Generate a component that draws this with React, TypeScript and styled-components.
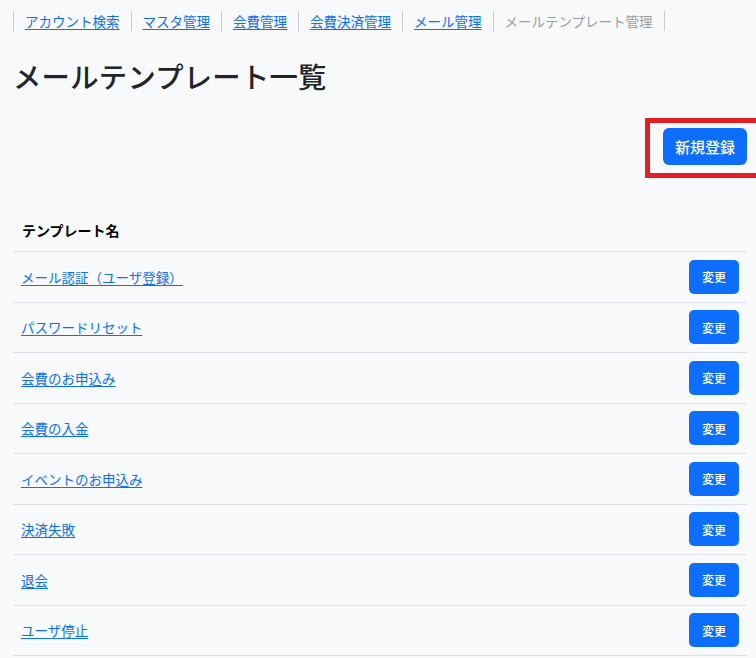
import React from "react";
import styled, { createGlobalStyle } from "styled-components";

const Global = createGlobalStyle`
  html, body { margin: 0; padding: 0; background: #f8f9fa; }
  body {
    font-family: "Noto Sans CJK JP", "Noto Sans", sans-serif;
    color: #212529;
    overflow: hidden;
  }
`;

const Page = styled.div`
  padding: 0 9px 0 13px;
`;

const Breadcrumb = styled.nav`
  display: flex;
  align-items: center;
  padding-top: 11px;
  height: 20px;
`;

const Crumb = styled.a<{ $current?: boolean }>`
  display: block;
  border-left: 1px solid #c8cacc;
  padding: 0 11px 0 11px;
  font-size: 13.5px;
  line-height: 20px;
  color: ${(p) => (p.$current ? "#9a9ea3" : "#0d6efd")};
  text-decoration: ${(p) => (p.$current ? "none" : "underline")};
  text-underline-offset: 2px;
  &:last-child { border-right: 1px solid #c8cacc; }
`;

const Title = styled.h1`
  margin: 27px 0 0 0;
  font-size: 28.3px;
  font-weight: 500;
  line-height: 36px;
  letter-spacing: 0.3px;
`;

const Actions = styled.div`
  display: flex;
  justify-content: flex-end;
  margin-top: 24px;
  margin-right: -16px;
`;

const Highlight = styled.div`
  border: 5px solid #e31e24;
  padding: 5px 11px 8px 13px;
`;

const PrimaryButton = styled.button<{ $small?: boolean }>`
  background: #0d6efd;
  color: #fff;
  border: none;
  border-radius: ${(p) => (p.$small ? "5px" : "6px")};
  font-family: inherit;
  font-size: ${(p) => (p.$small ? "12px" : "15px")};
  font-weight: 500;
  width: ${(p) => (p.$small ? "50px" : "84px")};
  height: ${(p) => (p.$small ? "34px" : "37px")};
  padding: 0;
  cursor: pointer;
`;

const Table = styled.div`
  margin-top: 34px;
`;

const HeaderRow = styled.div`
  padding: 0 9px 3px;
  height: 36px;
  display: flex;
  align-items: center;
  font-size: 14px;
  font-weight: 700;
  color: #000;
  border-bottom: 1px solid #dee2e6;
`;

const Row = styled.div`
  display: flex;
  align-items: center;
  justify-content: space-between;
  height: 49.5px;
  padding: 0 8px;
  border-bottom: 1px solid #dee2e6;
`;

const RowLink = styled.a`
  font-size: 13.5px;
  color: #0d6efd;
  text-decoration: underline;
  text-underline-offset: 2px;
`;

const crumbs = ["アカウント検索", "マスタ管理", "会費管理", "会費決済管理", "メール管理"];
const rows = [
  "メール認証（ユーザ登録）",
  "パスワードリセット",
  "会費のお申込み",
  "会費の入金",
  "イベントのお申込み",
  "決済失敗",
  "退会",
  "ユーザ停止",
];

export default function App() {
  return (
    <Page>
      <Global />
      <Breadcrumb>
        {crumbs.map((c) => (
          <Crumb key={c} href="#">{c}</Crumb>
        ))}
        <Crumb as="span" $current>メールテンプレート管理</Crumb>
      </Breadcrumb>
      <Title>メールテンプレート一覧</Title>
      <Actions>
        <Highlight>
          <PrimaryButton>新規登録</PrimaryButton>
        </Highlight>
      </Actions>
      <Table>
        <HeaderRow>テンプレート名</HeaderRow>
        {rows.map((r) => (
          <Row key={r}>
            <RowLink href="#">{r}</RowLink>
            <PrimaryButton $small>変更</PrimaryButton>
          </Row>
        ))}
      </Table>
    </Page>
  );
}
